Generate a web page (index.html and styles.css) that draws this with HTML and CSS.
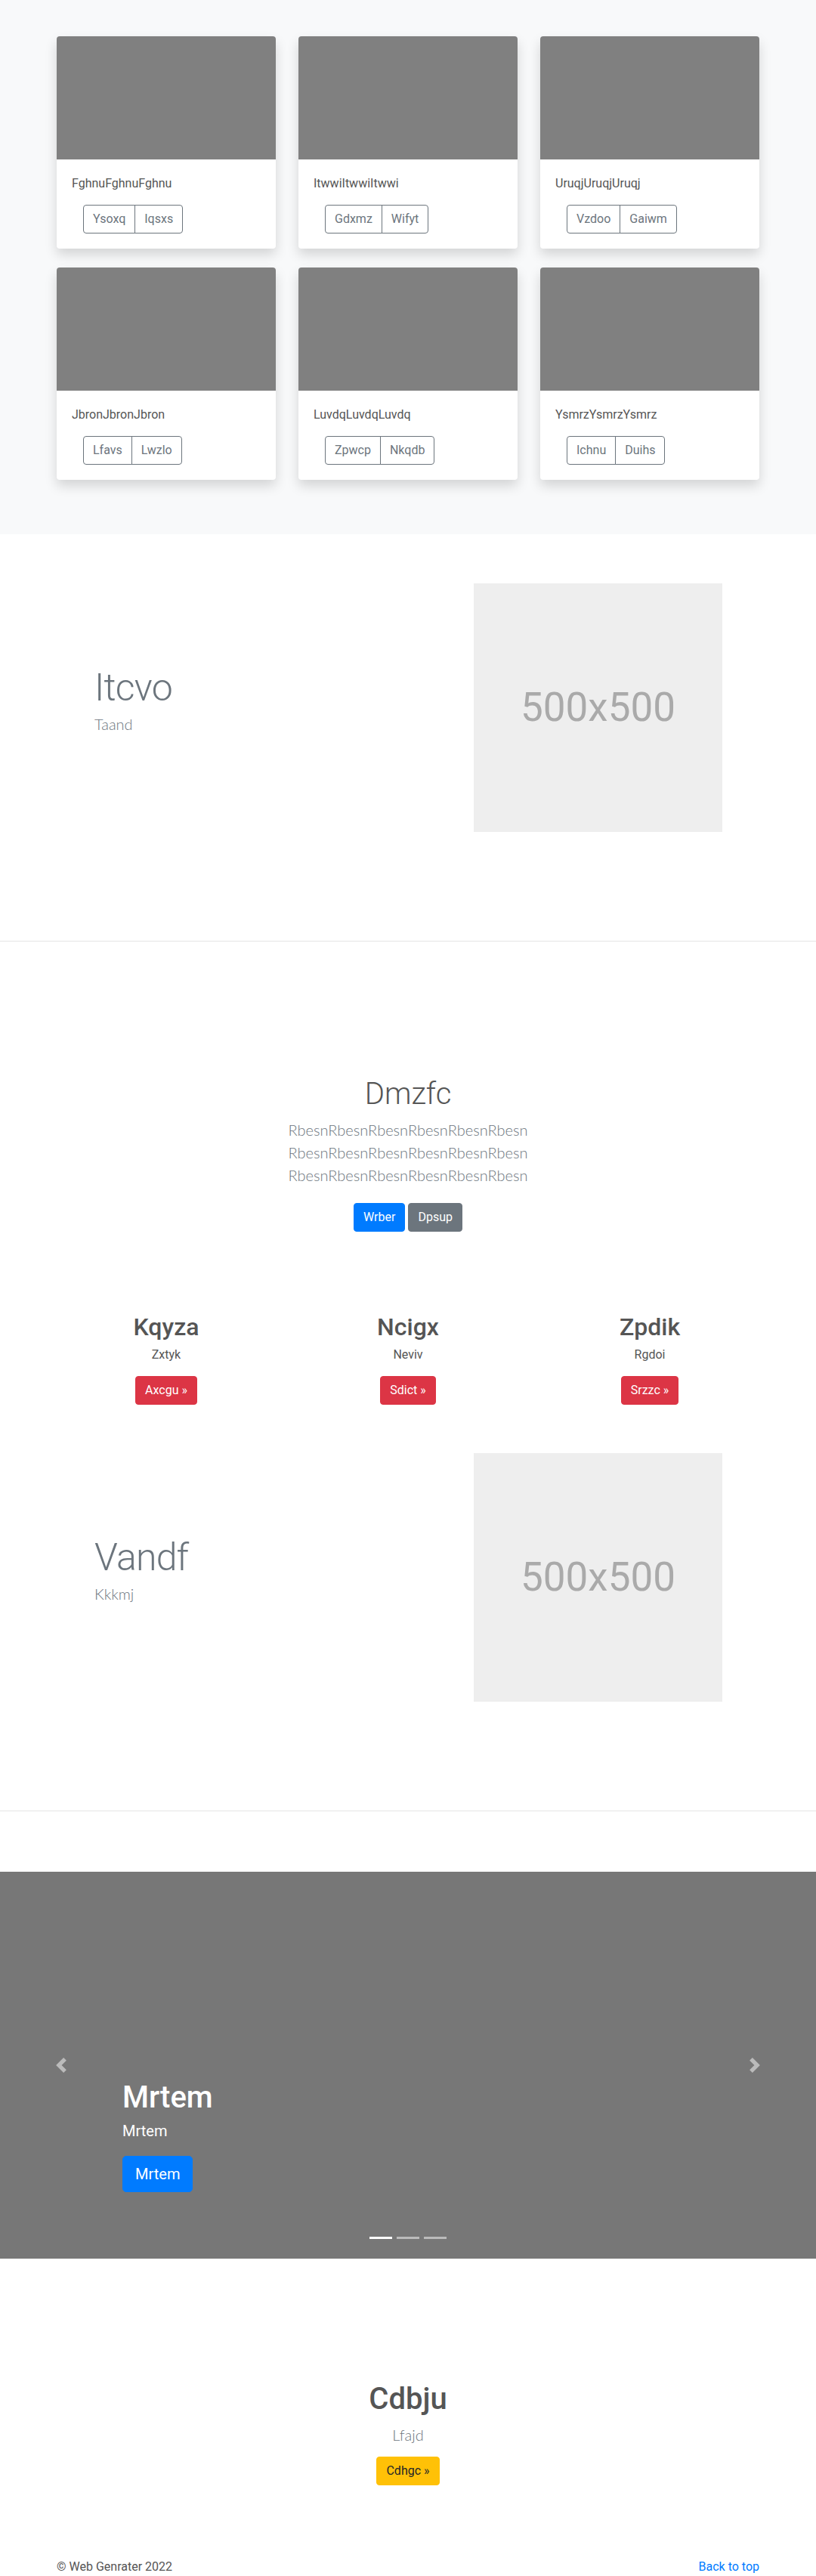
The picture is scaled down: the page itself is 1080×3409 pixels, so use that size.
FILE: index.html
```html
<!DOCTYPE html>
<html lang="en">
<head>
<meta charset="utf-8">
<title>Album</title>
<link rel="stylesheet" href="styles.css">
</head>
<body>
<main>
  <section class="album">
    <div class="album-grid">
      <div class="card">
        <div class="card-img"></div>
        <div class="card-body">
          <p class="card-text">FghnuFghnuFghnu</p>
          <div class="btn-group"><a class="btn btn-outline">Ysoxq</a><a class="btn btn-outline">Iqsxs</a></div>
        </div>
      </div>
      <div class="card">
        <div class="card-img"></div>
        <div class="card-body">
          <p class="card-text">ItwwiItwwiItwwi</p>
          <div class="btn-group"><a class="btn btn-outline">Gdxmz</a><a class="btn btn-outline">Wifyt</a></div>
        </div>
      </div>
      <div class="card">
        <div class="card-img"></div>
        <div class="card-body">
          <p class="card-text">UruqjUruqjUruqj</p>
          <div class="btn-group"><a class="btn btn-outline">Vzdoo</a><a class="btn btn-outline">Gaiwm</a></div>
        </div>
      </div>
      <div class="card">
        <div class="card-img"></div>
        <div class="card-body">
          <p class="card-text">JbronJbronJbron</p>
          <div class="btn-group"><a class="btn btn-outline">Lfavs</a><a class="btn btn-outline">Lwzlo</a></div>
        </div>
      </div>
      <div class="card">
        <div class="card-img"></div>
        <div class="card-body">
          <p class="card-text">LuvdqLuvdqLuvdq</p>
          <div class="btn-group"><a class="btn btn-outline">Zpwcp</a><a class="btn btn-outline">Nkqdb</a></div>
        </div>
      </div>
      <div class="card">
        <div class="card-img"></div>
        <div class="card-body">
          <p class="card-text">YsmrzYsmrzYsmrz</p>
          <div class="btn-group"><a class="btn btn-outline">Ichnu</a><a class="btn btn-outline">Duihs</a></div>
        </div>
      </div>
    </div>
  </section>

  <section class="feature">
    <div class="feature-text">
      <h2 class="feature-heading">Itcvo</h2>
      <p class="lead muted">Taand</p>
    </div>
    <div class="placeholder"><span>500x500</span></div>
  </section>
  <hr class="divider">

  <section class="jumbo">
    <h1 class="jumbo-heading">Dmzfc</h1>
    <p class="lead muted">RbesnRbesnRbesnRbesnRbesnRbesn<br>RbesnRbesnRbesnRbesnRbesnRbesn<br>RbesnRbesnRbesnRbesnRbesnRbesn</p>
    <p class="jumbo-actions"><a class="btn btn-primary">Wrber</a><a class="btn btn-secondary">Dpsup</a></p>
  </section>

  <section class="marketing">
    <div class="mcol">
      <h2>Kqyza</h2>
      <p>Zxtyk</p>
      <p class="mcol-action"><a class="btn btn-danger">Axcgu »</a></p>
    </div>
    <div class="mcol">
      <h2>Ncigx</h2>
      <p>Neviv</p>
      <p class="mcol-action"><a class="btn btn-danger">Sdict »</a></p>
    </div>
    <div class="mcol">
      <h2>Zpdik</h2>
      <p>Rgdoi</p>
      <p class="mcol-action"><a class="btn btn-danger">Srzzc »</a></p>
    </div>
  </section>

  <section class="feature feature-second">
    <div class="feature-text">
      <h2 class="feature-heading">Vandf</h2>
      <p class="lead muted">Kkkmj</p>
    </div>
    <div class="placeholder"><span>500x500</span></div>
  </section>
  <hr class="divider">

  <section class="carousel">
    <div class="caption">
      <h1>Mrtem</h1>
      <p>Mrtem</p>
      <a class="btn btn-lg btn-primary">Mrtem</a>
    </div>
    <a class="control control-prev" aria-label="Previous">
      <svg width="20" height="20" viewBox="0 0 8 8"><path fill="#fff" d="M5.25 0l-4 4 4 4 1.5-1.5L4.25 4l2.5-2.5L5.25 0z"/></svg>
    </a>
    <a class="control control-next" aria-label="Next">
      <svg width="20" height="20" viewBox="0 0 8 8"><path fill="#fff" d="M2.75 0l-1.5 1.5L3.75 4l-2.5 2.5L2.75 8l4-4-4-4z"/></svg>
    </a>
    <div class="indicators"><span class="active"></span><span></span><span></span></div>
  </section>

  <section class="cta">
    <h1>Cdbju</h1>
    <p class="lead muted">Lfajd</p>
    <a class="btn btn-warning">Cdhgc »</a>
  </section>

  <footer class="footer">
    <p>© Web Genrater 2022</p>
    <a class="back">Back to top</a>
  </footer>
</main>
</body>
</html>
```

FILE: styles.css
```css
* { box-sizing: border-box; }

body {
  margin: 0;
  font-family: Roboto, "Liberation Sans", Arial, sans-serif;
  font-size: 16px;
  line-height: 1.5;
  color: #555;
  background: #fff;
}

p { margin: 0; }
h1, h2 { margin: 0; }

.muted { color: #6c757d; }
.lead {
  font-family: Lato, Roboto, "Liberation Sans", sans-serif;
  font-size: 20px;
  line-height: 30px;
  font-weight: 300;
}

/* buttons */
.btn {
  display: inline-block;
  font-size: 16px;
  line-height: 24px;
  padding: 6px 12px;
  border: 1px solid transparent;
  border-radius: 4px;
  text-decoration: none;
  text-align: center;
  white-space: nowrap;
}
.btn-lg { font-size: 20px; line-height: 30px; padding: 8px 16px; border-radius: 5px; }
.btn-primary { background: #007bff; border-color: #007bff; color: #fff; }
.btn-secondary { background: #6c757d; border-color: #6c757d; color: #fff; }
.btn-danger { background: #dc3545; border-color: #dc3545; color: #fff; }
.btn-warning { background: #ffc107; border-color: #ffc107; color: #212529; }
.btn-outline { color: #6c757d; border-color: #6c757d; background: transparent; }

.btn-group { display: inline-flex; margin-left: 15px; }
.btn-group .btn:first-child { border-top-right-radius: 0; border-bottom-right-radius: 0; }
.btn-group .btn + .btn { margin-left: -1px; border-top-left-radius: 0; border-bottom-left-radius: 0; }

/* album */
.album {
  background: #f8f9fa;
  padding: 48px 0 72px;
}
.album-grid {
  width: 930px;
  margin: 0 auto;
  display: grid;
  grid-template-columns: repeat(3, 290px);
  column-gap: 30px;
  row-gap: 25px;
}
.card {
  background: #fff;
  border-radius: 4px;
  overflow: hidden;
  box-shadow: 0 8px 16px rgba(0, 0, 0, 0.15);
}
.card-img {
  height: 163px;
  background: #808080;
}
.card-body { padding: 20px; }
.card-text { margin-bottom: 16px; }

/* featurettes */
.feature {
  display: flex;
  align-items: center;
  padding: 65px 124px 144px 125px;
}
.feature-second { padding-top: 64px; }
.feature-text { flex: 1; }
.feature-heading {
  font-size: 50px;
  line-height: 1;
  font-weight: 300;
  letter-spacing: -0.8px;
  color: #6c757d;
  margin-bottom: 8px;
}
.feature-text .lead { margin-bottom: 16px; }
.placeholder {
  width: 329px;
  height: 329px;
  background: #eee;
  display: flex;
  align-items: center;
  justify-content: center;
  color: #aaa;
  font-size: 53px;
}

.divider {
  margin: 0;
  border: 0;
  border-top: 1px solid rgba(0, 0, 0, 0.1);
}

/* jumbotron */
.jumbo {
  text-align: center;
  padding-top: 178px;
}
.jumbo-heading {
  font-size: 40px;
  line-height: 48px;
  font-weight: 300;
  margin-bottom: 8px;
}
.jumbo .lead { margin-bottom: 16px; }
.jumbo-actions {
  display: flex;
  justify-content: center;
  gap: 4px;
  padding-top: 6px;
}

/* marketing */
.marketing {
  width: 960px;
  margin: 0 auto;
  padding-top: 107px;
  display: grid;
  grid-template-columns: repeat(3, 1fr);
  text-align: center;
}
.mcol h2 {
  font-size: 32px;
  line-height: 38px;
  font-weight: 500;
  margin-bottom: 6px;
}
.mcol p { margin-bottom: 16px; }
.mcol .mcol-action { margin-bottom: 0; }

/* carousel */
.carousel {
  position: relative;
  margin-top: 80px;
  height: 512px;
  background: #777;
  display: flex;
  flex-direction: column;
  justify-content: flex-end;
  padding: 0 162px 88px;
  color: #fff;
}
.caption { display: flex; flex-direction: column; }
.caption h1 {
  font-size: 40px;
  line-height: 48px;
  font-weight: 500;
  margin-bottom: 5px;
}
.caption p {
  font-size: 20px;
  line-height: 30px;
  margin-bottom: 18px;
}
.caption .btn { align-self: flex-start; }
.control {
  position: absolute;
  top: 0;
  bottom: 0;
  width: 15%;
  display: flex;
  align-items: center;
  justify-content: center;
  opacity: 0.5;
}
.control svg { display: block; }
.control-prev { left: 0; }
.control-next { right: 0; }
.indicators {
  position: absolute;
  left: 0;
  right: 0;
  bottom: 16px;
  display: flex;
  justify-content: center;
  gap: 6px;
}
.indicators span {
  width: 30px;
  height: 3px;
  margin: 10px 0;
  background: rgba(255, 255, 255, 0.5);
}
.indicators span.active { background: #fff; }

/* call to action */
.cta {
  text-align: center;
  padding-top: 162px;
}
.cta h1 {
  font-size: 40px;
  line-height: 48px;
  font-weight: 500;
  margin-bottom: 8px;
}
.cta .lead { margin-bottom: 14px; }

/* footer */
.footer {
  width: 930px;
  margin: 0 auto;
  padding: 96px 0 48px;
  display: flex;
  justify-content: space-between;
}
.footer p { color: #555; }
.back { color: #007bff; text-decoration: none; }
```
